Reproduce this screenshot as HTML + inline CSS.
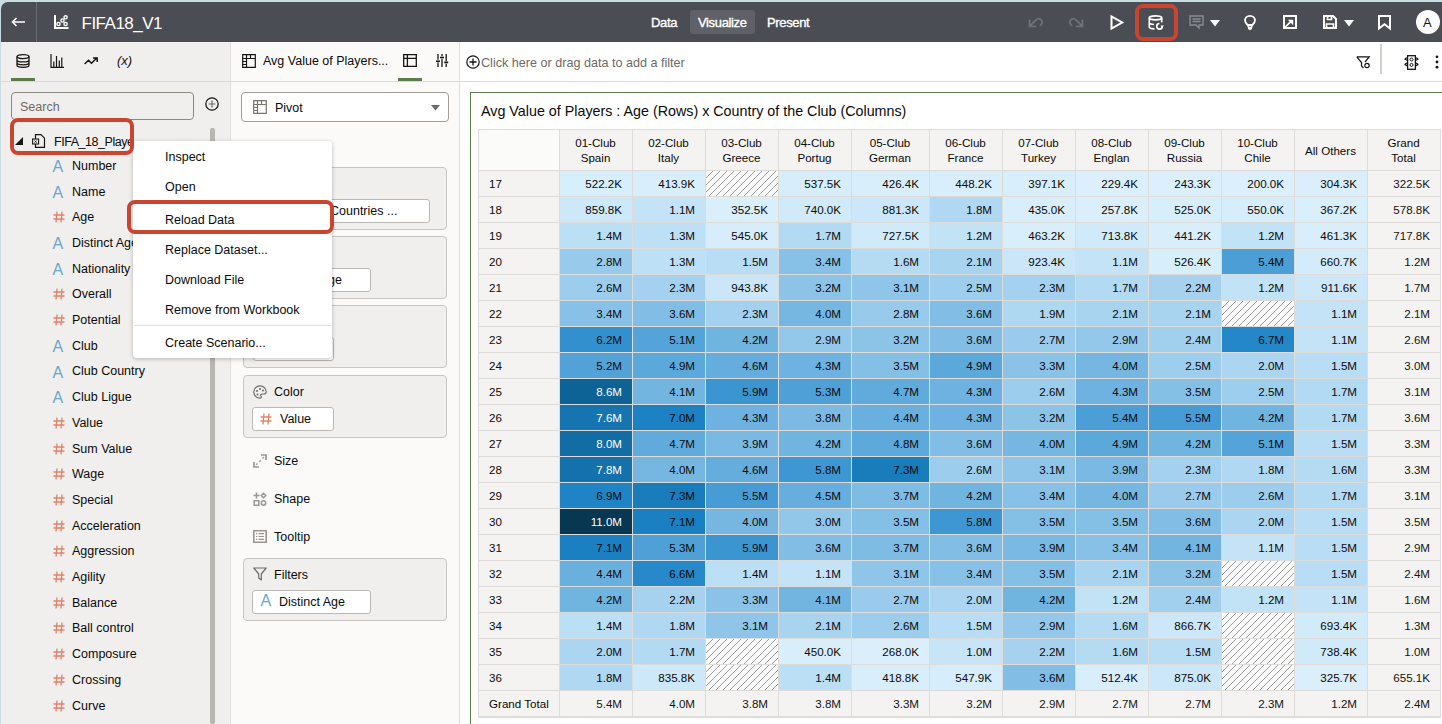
<!DOCTYPE html><html><head><meta charset="utf-8"><style>
*{box-sizing:border-box;margin:0;padding:0}
html,body{width:1442px;height:724px;overflow:hidden}
body{position:relative;background:#c7dde1;font-family:"Liberation Sans", sans-serif;color:#0b0a09}
.a{position:absolute}
.t{position:absolute;white-space:nowrap;line-height:1}
svg{position:absolute;overflow:visible}
</style></head><body><div class="a" style="left:1px;top:2px;width:1441px;height:40px;background:#4a4d54;border-top-left-radius:7px"></div>
<div class="a" style="left:36px;top:2px;width:1px;height:40px;background:#6b6e74"></div>
<svg style="left:11px;top:17px" width="15" height="10" viewBox="0 0 15 10"><path d="M14 5H2M5.5 1L1.5 5L5.5 9" fill="none" stroke="#fff" stroke-width="1.6"/></svg>
<svg style="left:54px;top:15px" width="15" height="15" viewBox="0 0 15 15"><path d="M1 0V13H14.5" fill="none" stroke="#fff" stroke-width="2"/><g fill="none" stroke="#fff" stroke-width="1.4"><circle cx="4.5" cy="9" r="1.6"/><circle cx="8.5" cy="5.5" r="1.6"/><circle cx="11.6" cy="9" r="1.6"/><circle cx="11.6" cy="2.3" r="1.6"/></g></svg>
<div class="t" style="left:81.5px;top:14.5px;font-size:17px;color:#fff;letter-spacing:-0.5px">FIFA18_V1</div>
<div class="a" style="left:690px;top:10px;width:65px;height:24px;background:#5e6167;border-radius:3px"></div>
<div class="t" style="left:651px;top:16px;font-size:13px;color:#fff;-webkit-text-stroke:0.35px #fff;letter-spacing:-0.3px">Data</div>
<div class="t" style="left:698px;top:16px;font-size:13px;color:#fff;-webkit-text-stroke:0.35px #fff;letter-spacing:-0.35px">Visualize</div>
<div class="t" style="left:767px;top:16px;font-size:13px;color:#fff;-webkit-text-stroke:0.35px #fff;letter-spacing:-0.35px">Present</div>
<svg style="left:1028px;top:17px" width="16" height="11" viewBox="0 0 16 11"><path d="M1.6 2.6V9.3H8M1.8 9L8.6 2.4A3.5 3.5 0 1 1 11.6 8.6" fill="none" stroke="#6e7176" stroke-width="1.8"/></svg>
<svg style="left:1068px;top:17px" width="16" height="11" viewBox="0 0 16 11"><g transform="translate(16 0) scale(-1 1)"><path d="M1.6 2.6V9.3H8M1.8 9L8.6 2.4A3.5 3.5 0 1 1 11.6 8.6" fill="none" stroke="#6e7176" stroke-width="1.8"/></g></svg>
<svg style="left:1110px;top:15px" width="14" height="15" viewBox="0 0 14 15"><path d="M1.5 1.5V13.5L12.2 7.5Z" fill="none" stroke="#fff" stroke-width="2" stroke-linejoin="miter"/></svg>
<div class="a" style="left:1135px;top:4px;width:43px;height:37px;border:4px solid #c9452f;border-radius:8px"></div>
<svg style="left:1148px;top:15px" width="16" height="15" viewBox="0 0 16 15"><ellipse cx="7.5" cy="2.8" rx="6.2" ry="2" fill="none" stroke="#fff" stroke-width="1.7"/><path d="M1.3 2.8V12C1.3 13 3.5 13.7 6.5 13.8M13.7 2.8V7.5M1.3 7.8C1.3 8.6 3 9.3 6 9.5" fill="none" stroke="#fff" stroke-width="1.7"/><path d="M14.3 11.3A2.8 2.8 0 1 1 11.5 8.5" fill="none" stroke="#fff" stroke-width="1.7"/><path d="M12.5 10.5L15.8 10.5L14.2 13.3Z" fill="#fff"/></svg>
<svg style="left:1189px;top:15px" width="15" height="14" viewBox="0 0 15 14"><path d="M1 1H14V10H10V13L7 10H1Z" fill="none" stroke="#8a8c90" stroke-width="1.4"/><path d="M3.5 4H11.5M3.5 6.5H11.5" stroke="#8a8c90" stroke-width="1.3"/></svg>
<svg style="left:1210px;top:20px" width="10" height="7" viewBox="0 0 10 7"><path d="M0 0H10L5 6.5Z" fill="#fff"/></svg>
<svg style="left:1244px;top:15px" width="12" height="15" viewBox="0 0 12 15"><path d="M3.6 10C2 8.6 1 7.2 1 5.3A5 4.5 0 0 1 11 5.3C11 7.2 10 8.6 8.4 10Z" fill="none" stroke="#fff" stroke-width="1.8"/><path d="M3.8 9.5L4.6 12.5H7.4L8.2 9.5M4.6 12.8A1.4 1.4 0 0 0 7.4 12.8" fill="none" stroke="#fff" stroke-width="1.6"/></svg>
<svg style="left:1283px;top:15px" width="14" height="14" viewBox="0 0 14 14"><path d="M1 1H13V13H1Z" fill="none" stroke="#fff" stroke-width="2"/><path d="M2.3 12L8.5 5.8" stroke="#fff" stroke-width="1.7"/><path d="M4.8 4.8H10.2V10.2Z" fill="#fff"/></svg>
<svg style="left:1323px;top:15px" width="14" height="14" viewBox="0 0 14 14"><path d="M1 1H10L13 4V13H1Z" fill="none" stroke="#fff" stroke-width="2"/><path d="M4.5 1V4.5H8.5V1M3.5 13V9H10.5V13" fill="none" stroke="#fff" stroke-width="1.7"/></svg>
<svg style="left:1344px;top:20px" width="10" height="7" viewBox="0 0 10 7"><path d="M0 0H10L5 6.5Z" fill="#fff"/></svg>
<svg style="left:1378px;top:15px" width="13" height="15" viewBox="0 0 13 15"><path d="M1 1H12V13.5L6.5 9.3L1 13.5Z" fill="none" stroke="#fff" stroke-width="2"/></svg>
<div class="a" style="left:1416px;top:10px;width:24px;height:24px;border-radius:50%;background:#fff"></div>
<div class="t" style="left:1423px;top:16px;font-size:13px;color:#161513">A</div>
<div class="a" style="left:1px;top:42px;width:230px;height:682px;background:#f1efed"></div>
<div class="a" style="left:1px;top:81px;width:230px;height:1px;background:#dcd9d5"></div>
<div class="a" style="left:11px;top:78px;width:24px;height:3px;background:#5b7b4c"></div>
<svg style="left:16px;top:54px" width="14" height="14" viewBox="0 0 14 14"><ellipse cx="7" cy="2.6" rx="6" ry="2" fill="none" stroke="#161513" stroke-width="1.3"/><path d="M1 2.6V11.3C1 12.5 3.7 13.3 7 13.3S13 12.5 13 11.3V2.6M1 5.9C1 7.1 3.7 7.9 7 7.9S13 7.1 13 5.9M1 8.8C1 10 3.7 10.8 7 10.8S13 10 13 8.8" fill="none" stroke="#161513" stroke-width="1.3"/></svg>
<svg style="left:50px;top:54px" width="14" height="14" viewBox="0 0 14 14"><path d="M1 0V13.3H14M3.8 7.5V13M6.5 2V13M9.3 6.5V13M11.8 3.5V13" fill="none" stroke="#161513" stroke-width="1.2"/></svg>
<svg style="left:84px;top:57px" width="14" height="8" viewBox="0 0 14 8"><path d="M0.6 7L4.5 3.3L7.5 6.3L12.8 1M9 1H13.2V5" fill="none" stroke="#161513" stroke-width="1.5"/></svg>
<div class="t" style="left:117px;top:54px;font-size:13px;font-style:italic;color:#161513">(x)</div>
<div class="a" style="left:11px;top:92px;width:183px;height:28px;border:1px solid #8f8984;border-radius:4px;background:#f1efed"></div>
<div class="t" style="left:20px;top:101px;font-size:12.5px;color:#6f6a65">Search</div>
<svg style="left:205px;top:97px" width="14" height="14" viewBox="0 0 14 14"><circle cx="7" cy="7" r="6.2" fill="none" stroke="#161513" stroke-width="1.2"/><path d="M7 3.6V10.4M3.6 7H10.4" stroke="#6f6a65" stroke-width="1.2"/></svg>
<div class="a" style="left:210px;top:128px;width:4.5px;height:596px;background:#b9b5b0;border-radius:2px"></div>
<svg style="left:15px;top:137px" width="8" height="8" viewBox="0 0 8 8"><path d="M8 0V8H0Z" fill="#161513"/></svg>
<svg style="left:32px;top:134px" width="14" height="14" viewBox="0 0 14 14"><path d="M3.5 0.7H9L12.5 4.2V13.3H3.5Z" fill="none" stroke="#161513" stroke-width="1.2"/><rect x="0.6" y="5" width="6" height="5" fill="#f1efed" stroke="#161513" stroke-width="1.1"/><path d="M2.5 6.5L4.7 8.7M4.7 6.5L2.5 8.7" stroke="#161513" stroke-width="0.9"/></svg>
<div class="t" style="left:54px;top:136px;width:78px;overflow:hidden;font-size:12.5px;letter-spacing:-0.45px">FIFA_18_Playe</div>
<div class="t" style="left:52.5px;top:159.0px;font-size:16px;color:#6aa6cb">A</div>
<div class="t" style="left:72px;top:159.8px;font-size:12.5px">Number</div>
<div class="t" style="left:52.5px;top:184.7px;font-size:16px;color:#6aa6cb">A</div>
<div class="t" style="left:72px;top:185.5px;font-size:12.5px">Name</div>
<svg style="left:53px;top:211.2px" width="12" height="12" viewBox="0 0 12 12"><path d="M4 0.5L3 11.5M9 0.5L8 11.5M0.5 4H11.5M0.5 8H11.5" stroke="#e0826a" stroke-width="1.3"/></svg>
<div class="t" style="left:72px;top:211.2px;font-size:12.5px">Age</div>
<div class="t" style="left:52.5px;top:236.1px;font-size:16px;color:#6aa6cb">A</div>
<div class="t" style="left:72px;top:236.9px;font-size:12.5px">Distinct Age</div>
<div class="t" style="left:52.5px;top:261.8px;font-size:16px;color:#6aa6cb">A</div>
<div class="t" style="left:72px;top:262.6px;font-size:12.5px">Nationality</div>
<svg style="left:53px;top:288.3px" width="12" height="12" viewBox="0 0 12 12"><path d="M4 0.5L3 11.5M9 0.5L8 11.5M0.5 4H11.5M0.5 8H11.5" stroke="#e0826a" stroke-width="1.3"/></svg>
<div class="t" style="left:72px;top:288.3px;font-size:12.5px">Overall</div>
<svg style="left:53px;top:314.0px" width="12" height="12" viewBox="0 0 12 12"><path d="M4 0.5L3 11.5M9 0.5L8 11.5M0.5 4H11.5M0.5 8H11.5" stroke="#e0826a" stroke-width="1.3"/></svg>
<div class="t" style="left:72px;top:314.0px;font-size:12.5px">Potential</div>
<div class="t" style="left:52.5px;top:338.9px;font-size:16px;color:#6aa6cb">A</div>
<div class="t" style="left:72px;top:339.7px;font-size:12.5px">Club</div>
<div class="t" style="left:52.5px;top:364.6px;font-size:16px;color:#6aa6cb">A</div>
<div class="t" style="left:72px;top:365.4px;font-size:12.5px">Club Country</div>
<div class="t" style="left:52.5px;top:390.3px;font-size:16px;color:#6aa6cb">A</div>
<div class="t" style="left:72px;top:391.1px;font-size:12.5px">Club Ligue</div>
<svg style="left:53px;top:416.8px" width="12" height="12" viewBox="0 0 12 12"><path d="M4 0.5L3 11.5M9 0.5L8 11.5M0.5 4H11.5M0.5 8H11.5" stroke="#e0826a" stroke-width="1.3"/></svg>
<div class="t" style="left:72px;top:416.8px;font-size:12.5px">Value</div>
<svg style="left:53px;top:442.5px" width="12" height="12" viewBox="0 0 12 12"><path d="M4 0.5L3 11.5M9 0.5L8 11.5M0.5 4H11.5M0.5 8H11.5" stroke="#e0826a" stroke-width="1.3"/></svg>
<div class="t" style="left:72px;top:442.5px;font-size:12.5px">Sum Value</div>
<svg style="left:53px;top:468.2px" width="12" height="12" viewBox="0 0 12 12"><path d="M4 0.5L3 11.5M9 0.5L8 11.5M0.5 4H11.5M0.5 8H11.5" stroke="#e0826a" stroke-width="1.3"/></svg>
<div class="t" style="left:72px;top:468.2px;font-size:12.5px">Wage</div>
<svg style="left:53px;top:493.9px" width="12" height="12" viewBox="0 0 12 12"><path d="M4 0.5L3 11.5M9 0.5L8 11.5M0.5 4H11.5M0.5 8H11.5" stroke="#e0826a" stroke-width="1.3"/></svg>
<div class="t" style="left:72px;top:493.9px;font-size:12.5px">Special</div>
<svg style="left:53px;top:519.6px" width="12" height="12" viewBox="0 0 12 12"><path d="M4 0.5L3 11.5M9 0.5L8 11.5M0.5 4H11.5M0.5 8H11.5" stroke="#e0826a" stroke-width="1.3"/></svg>
<div class="t" style="left:72px;top:519.6px;font-size:12.5px">Acceleration</div>
<svg style="left:53px;top:545.3px" width="12" height="12" viewBox="0 0 12 12"><path d="M4 0.5L3 11.5M9 0.5L8 11.5M0.5 4H11.5M0.5 8H11.5" stroke="#e0826a" stroke-width="1.3"/></svg>
<div class="t" style="left:72px;top:545.3px;font-size:12.5px">Aggression</div>
<svg style="left:53px;top:571.0px" width="12" height="12" viewBox="0 0 12 12"><path d="M4 0.5L3 11.5M9 0.5L8 11.5M0.5 4H11.5M0.5 8H11.5" stroke="#e0826a" stroke-width="1.3"/></svg>
<div class="t" style="left:72px;top:571.0px;font-size:12.5px">Agility</div>
<svg style="left:53px;top:596.7px" width="12" height="12" viewBox="0 0 12 12"><path d="M4 0.5L3 11.5M9 0.5L8 11.5M0.5 4H11.5M0.5 8H11.5" stroke="#e0826a" stroke-width="1.3"/></svg>
<div class="t" style="left:72px;top:596.7px;font-size:12.5px">Balance</div>
<svg style="left:53px;top:622.4px" width="12" height="12" viewBox="0 0 12 12"><path d="M4 0.5L3 11.5M9 0.5L8 11.5M0.5 4H11.5M0.5 8H11.5" stroke="#e0826a" stroke-width="1.3"/></svg>
<div class="t" style="left:72px;top:622.4px;font-size:12.5px">Ball control</div>
<svg style="left:53px;top:648.1px" width="12" height="12" viewBox="0 0 12 12"><path d="M4 0.5L3 11.5M9 0.5L8 11.5M0.5 4H11.5M0.5 8H11.5" stroke="#e0826a" stroke-width="1.3"/></svg>
<div class="t" style="left:72px;top:648.1px;font-size:12.5px">Composure</div>
<svg style="left:53px;top:673.8px" width="12" height="12" viewBox="0 0 12 12"><path d="M4 0.5L3 11.5M9 0.5L8 11.5M0.5 4H11.5M0.5 8H11.5" stroke="#e0826a" stroke-width="1.3"/></svg>
<div class="t" style="left:72px;top:673.8px;font-size:12.5px">Crossing</div>
<svg style="left:53px;top:699.5px" width="12" height="12" viewBox="0 0 12 12"><path d="M4 0.5L3 11.5M9 0.5L8 11.5M0.5 4H11.5M0.5 8H11.5" stroke="#e0826a" stroke-width="1.3"/></svg>
<div class="t" style="left:72px;top:699.5px;font-size:12.5px">Curve</div>
<div class="a" style="left:230px;top:42px;width:230px;height:682px;background:#fbfaf9;border-left:1px solid #e2dfdb;border-right:1px solid #e2dfdb"></div>
<div class="a" style="left:231px;top:81px;width:229px;height:1px;background:#dcd9d5"></div>
<div class="a" style="left:398px;top:78px;width:24px;height:3px;background:#5b7b4c"></div>
<svg style="left:242px;top:54px" width="14" height="14" viewBox="0 0 14 14"><path d="M0.7 0.7H13.3V13.3H0.7ZM0.7 4.5H13.3M4.5 0.7V13.3M0.7 7.5H4.5M0.7 10.5H4.5M8.5 0.7V4.5" fill="none" stroke="#161513" stroke-width="1.2"/></svg>
<div class="t" style="left:263px;top:55px;font-size:12.5px">Avg Value of Players...</div>
<svg style="left:403px;top:54px" width="14" height="13" viewBox="0 0 14 13"><path d="M0.7 0.7H13.3V12.3H0.7ZM4.4 0.7V12.3M0.7 4.3H13.3" fill="none" stroke="#161513" stroke-width="1.3"/></svg>
<svg style="left:436px;top:54px" width="13" height="13" viewBox="0 0 13 13"><path d="M2 0V5.8M2 8.6V13M6 0V2.2M6 4.8V13M10.2 0V7M10.2 9.8V13" stroke="#161513" stroke-width="1.3"/><path d="M0 7.3H4M4 3.5H8M8.2 8.4H12.2" stroke="#161513" stroke-width="1.6"/></svg>
<div class="a" style="left:241px;top:92px;width:208px;height:30px;border:1px solid #a29c97;border-radius:4px;background:#fff"></div>
<svg style="left:253px;top:100px" width="14" height="14" viewBox="0 0 14 14"><path d="M0.7 0.7H13.3V13.3H0.7ZM0.7 4.5H13.3M4.5 0.7V13.3M0.7 7.5H4.5M0.7 10.5H4.5M8.5 0.7V4.5" fill="none" stroke="#7a746f" stroke-width="1.2"/></svg>
<div class="t" style="left:275px;top:102px;font-size:12.5px">Pivot</div>
<svg style="left:431px;top:105px" width="9" height="6" viewBox="0 0 9 6"><path d="M0 0H9L4.5 5.5Z" fill="#6f6a65"/></svg>
<div class="a" style="left:243px;top:167px;width:204px;height:63px;border:1px solid #c9c5c0;border-radius:4px;background:#f1efed"></div>
<div class="a" style="left:253px;top:199px;width:177px;height:24px;border:1px solid #bdb8b3;border-radius:3px;background:#fff"></div>
<div class="t" style="left:330px;top:205px;font-size:12.5px">Countries ...</div>
<div class="a" style="left:243px;top:236px;width:204px;height:63px;border:1px solid #c9c5c0;border-radius:4px;background:#f1efed"></div>
<div class="a" style="left:253px;top:268px;width:118px;height:24px;border:1px solid #bdb8b3;border-radius:3px;background:#fff"></div>
<div class="t" style="left:328px;top:274px;font-size:12.5px">ge</div>
<div class="a" style="left:243px;top:305px;width:204px;height:63px;border:1px solid #c9c5c0;border-radius:4px;background:#f1efed"></div>
<div class="a" style="left:253px;top:337px;width:81px;height:24px;border:1px solid #bdb8b3;border-radius:3px;background:#fff"></div>
<div class="a" style="left:243px;top:375px;width:204px;height:63px;border:1px solid #c9c5c0;border-radius:4px;background:#f1efed"></div>
<div class="a" style="left:252px;top:407px;width:82px;height:24px;border:1px solid #bdb8b3;border-radius:3px;background:#fff"></div>
<svg style="left:253px;top:385px" width="14" height="14" viewBox="0 0 14 14"><path d="M7 0.8A6.2 6.2 0 1 0 7 13.2C8.2 13.2 8.5 12.2 8 11.2C7.3 10 8 9 9.3 9H11C12.5 9 13.2 8 13.2 6.8A6.2 6 0 0 0 7 0.8Z" fill="none" stroke="#6f6a65" stroke-width="1.2"/><circle cx="4" cy="6" r="1" fill="#6f6a65"/><circle cx="7" cy="4" r="1" fill="#6f6a65"/><circle cx="10" cy="5.5" r="1" fill="#6f6a65"/><circle cx="4.5" cy="9.5" r="1" fill="#6f6a65"/></svg>
<div class="t" style="left:274px;top:386px;font-size:12.5px">Color</div>
<svg style="left:260px;top:413px" width="12" height="12" viewBox="0 0 12 12"><path d="M4 0.5L3 11.5M9 0.5L8 11.5M0.5 4H11.5M0.5 8H11.5" stroke="#e0826a" stroke-width="1.3"/></svg>
<div class="t" style="left:280px;top:413px;font-size:12.5px">Value</div>
<svg style="left:253px;top:454px" width="14" height="14" viewBox="0 0 14 14"><path d="M1 8V13H6M8 1H13V6" fill="none" stroke="#9c9691" stroke-width="1.7"/><path d="M3.2 10.8L4.5 9.5M6.3 7.7L7.7 6.3M9.5 4.5L10.8 3.2" stroke="#9c9691" stroke-width="1.4"/></svg>
<div class="t" style="left:274px;top:455px;font-size:12.5px">Size</div>
<svg style="left:253px;top:492px" width="14" height="14" viewBox="0 0 14 14"><path d="M3.5 0.5V6.5M0.5 3.5H6.5" stroke="#9c9691" stroke-width="1.6"/><path d="M10.5 1.2L12.8 3.5L10.5 5.8L8.2 3.5Z" fill="none" stroke="#9c9691" stroke-width="1.4"/><rect x="1.2" y="8.7" width="4.6" height="4.6" fill="none" stroke="#9c9691" stroke-width="1.5"/><circle cx="10.5" cy="11" r="2.2" fill="none" stroke="#9c9691" stroke-width="1.5"/></svg>
<div class="t" style="left:274px;top:493px;font-size:12.5px">Shape</div>
<svg style="left:253px;top:530px" width="14" height="13" viewBox="0 0 14 13"><path d="M0.8 0.8H13.2V12.2H0.8Z" fill="none" stroke="#9c9691" stroke-width="1.6"/><path d="M3 3.6H4.3M5.6 3.6H11M3 6.5H4.3M5.6 6.5H11M3 9.4H4.3M5.6 9.4H11" stroke="#9c9691" stroke-width="1.2"/></svg>
<div class="t" style="left:274px;top:531px;font-size:12.5px">Tooltip</div>
<div class="a" style="left:243px;top:558px;width:204px;height:63px;border:1px solid #c9c5c0;border-radius:4px;background:#f1efed"></div>
<div class="a" style="left:252px;top:590px;width:119px;height:24px;border:1px solid #bdb8b3;border-radius:3px;background:#fff"></div>
<svg style="left:253px;top:567px" width="14" height="14" viewBox="0 0 14 14"><path d="M0.8 1H13.2L8.3 7V13L5.7 11V7Z" fill="none" stroke="#6f6a65" stroke-width="1.2" stroke-linejoin="round"/></svg>
<div class="t" style="left:274px;top:569px;font-size:12.5px">Filters</div>
<div class="t" style="left:260.5px;top:592.5px;font-size:16px;color:#6aa6cb">A</div>
<div class="t" style="left:279px;top:596px;font-size:12.5px">Distinct Age</div>
<div class="a" style="left:133px;top:141px;width:199px;height:217px;background:#fff;border-radius:4px;box-shadow:0 1px 4px rgba(0,0,0,0.25)"></div>
<div class="t" style="left:165px;top:150.5px;font-size:12.5px">Inspect</div>
<div class="t" style="left:165px;top:180.5px;font-size:12.5px">Open</div>
<div class="t" style="left:165px;top:213.5px;font-size:12.5px">Reload Data</div>
<div class="t" style="left:165px;top:243.5px;font-size:12.5px">Replace Dataset...</div>
<div class="t" style="left:165px;top:273.5px;font-size:12.5px">Download File</div>
<div class="t" style="left:165px;top:303.5px;font-size:12.5px">Remove from Workbook</div>
<div class="t" style="left:165px;top:336.5px;font-size:12.5px">Create Scenario...</div>
<div class="a" style="left:134px;top:325px;width:197px;height:1px;background:#e4e1dd"></div>
<div class="a" style="left:127.3px;top:200.3px;width:207px;height:34.2px;border:4.2px solid #c9452f;border-radius:8px"></div>
<div class="a" style="left:9.7px;top:118.3px;width:124.5px;height:37px;border:4.2px solid #c9452f;border-radius:8px"></div>
<div class="a" style="left:460px;top:42px;width:982px;height:682px;background:#fff"></div>
<div class="a" style="left:460px;top:81px;width:982px;height:1px;background:#dcd9d5"></div>
<svg style="left:466px;top:55px" width="14" height="14" viewBox="0 0 14 14"><circle cx="7" cy="7" r="6.2" fill="none" stroke="#161513" stroke-width="1.2"/><path d="M7 3.5V10.5M3.5 7H10.5" stroke="#161513" stroke-width="1.3"/></svg>
<div class="t" style="left:481px;top:57px;font-size:12.6px;color:#6f6a65">Click here or drag data to add a filter</div>
<svg style="left:1356px;top:56px" width="15" height="13" viewBox="0 0 15 13"><path d="M0.8 0.8H13.2L9 6M7.5 12L5.5 10V6.5L0.8 0.8" fill="none" stroke="#161513" stroke-width="1.2"/><circle cx="11" cy="9.5" r="2.2" fill="none" stroke="#161513" stroke-width="1.2"/></svg>
<div class="a" style="left:1380px;top:44px;width:2px;height:30px;background:#d3cfca"></div>
<svg style="left:1404px;top:55px" width="15" height="15" viewBox="0 0 15 15"><rect x="3.6" y="0.7" width="7.8" height="13.6" fill="none" stroke="#161513" stroke-width="1.3"/><circle cx="7.5" cy="4.5" r="1.5" fill="none" stroke="#161513" stroke-width="1"/><circle cx="7.5" cy="9.9" r="1.5" fill="none" stroke="#161513" stroke-width="1"/><path d="M3.6 2.8A2.5 2 0 0 0 1 4.2L3.6 5.5M3.6 8.2A2.5 2 0 0 0 1 9.6L3.6 10.9M11.4 2.8A2.5 2 0 0 1 14 4.2L11.4 5.5M11.4 8.2A2.5 2 0 0 1 14 9.6L11.4 10.9" fill="none" stroke="#161513" stroke-width="1.2"/></svg>
<svg style="left:1435px;top:55px" width="4" height="14" viewBox="0 0 4 14"><circle cx="2" cy="1.8" r="1.4" fill="#161513"/><circle cx="2" cy="7" r="1.4" fill="#161513"/><circle cx="2" cy="12.2" r="1.4" fill="#161513"/></svg>
<div class="a" style="left:470px;top:92px;width:980px;height:640px;border:1px solid #5f7f50"></div>
<div class="t" style="left:481px;top:104px;font-size:14.3px">Avg Value of Players : Age (Rows) x Country of the Club (Columns)</div>
<div class="a" style="left:478px;top:129px;width:963px;height:589px;background:#dedcd9"></div>
<div class="a" style="left:479px;top:130px;width:80px;height:40px;background:#fbfbfa"></div>
<div class="a" style="left:560px;top:130px;width:72px;height:40px;background:#f4f3f1"></div>
<div class="t" style="left:559px;top:135px;width:73px;text-align:center;font-size:11.6px;line-height:15px">01-Club<br>Spain</div>
<div class="a" style="left:633px;top:130px;width:72px;height:40px;background:#f4f3f1"></div>
<div class="t" style="left:632px;top:135px;width:73px;text-align:center;font-size:11.6px;line-height:15px">02-Club<br>Italy</div>
<div class="a" style="left:706px;top:130px;width:72px;height:40px;background:#f4f3f1"></div>
<div class="t" style="left:705px;top:135px;width:73px;text-align:center;font-size:11.6px;line-height:15px">03-Club<br>Greece</div>
<div class="a" style="left:779px;top:130px;width:72px;height:40px;background:#f4f3f1"></div>
<div class="t" style="left:778px;top:135px;width:73px;text-align:center;font-size:11.6px;line-height:15px">04-Club<br>Portug</div>
<div class="a" style="left:852px;top:130px;width:77px;height:40px;background:#f4f3f1"></div>
<div class="t" style="left:851px;top:135px;width:78px;text-align:center;font-size:11.6px;line-height:15px">05-Club<br>German</div>
<div class="a" style="left:930px;top:130px;width:72px;height:40px;background:#f4f3f1"></div>
<div class="t" style="left:929px;top:135px;width:73px;text-align:center;font-size:11.6px;line-height:15px">06-Club<br>France</div>
<div class="a" style="left:1003px;top:130px;width:72px;height:40px;background:#f4f3f1"></div>
<div class="t" style="left:1002px;top:135px;width:73px;text-align:center;font-size:11.6px;line-height:15px">07-Club<br>Turkey</div>
<div class="a" style="left:1076px;top:130px;width:72px;height:40px;background:#f4f3f1"></div>
<div class="t" style="left:1075px;top:135px;width:73px;text-align:center;font-size:11.6px;line-height:15px">08-Club<br>Englan</div>
<div class="a" style="left:1149px;top:130px;width:72px;height:40px;background:#f4f3f1"></div>
<div class="t" style="left:1148px;top:135px;width:73px;text-align:center;font-size:11.6px;line-height:15px">09-Club<br>Russia</div>
<div class="a" style="left:1222px;top:130px;width:72px;height:40px;background:#f4f3f1"></div>
<div class="t" style="left:1221px;top:135px;width:73px;text-align:center;font-size:11.6px;line-height:15px">10-Club<br>Chile</div>
<div class="a" style="left:1295px;top:130px;width:72px;height:40px;background:#f4f3f1"></div>
<div class="t" style="left:1294px;top:143px;width:73px;text-align:center;font-size:11.6px;line-height:15px">All Others</div>
<div class="a" style="left:1368px;top:130px;width:72px;height:40px;background:#f4f3f1"></div>
<div class="t" style="left:1367px;top:135px;width:73px;text-align:center;font-size:11.6px;line-height:15px">Grand<br>Total</div>
<div class="a" style="left:479px;top:171px;width:80px;height:25px;background:#f4f3f1"></div>
<div class="t" style="left:489px;top:178px;font-size:11.6px">17</div>
<div class="a" style="left:560px;top:171px;width:72px;height:25px;background:#d7eefb"></div>
<div class="t" style="left:559px;top:178px;width:63px;text-align:right;font-size:11.6px;color:#0b0a09">522.2K</div>
<div class="a" style="left:633px;top:171px;width:72px;height:25px;background:#d9eefb"></div>
<div class="t" style="left:632px;top:178px;width:63px;text-align:right;font-size:11.6px;color:#0b0a09">413.9K</div>
<div class="a" style="left:706px;top:171px;width:72px;height:25px;background:repeating-linear-gradient(135deg,#fafafa 0 4.25px,#9d9d9d 4.25px 4.95px)"></div>
<div class="a" style="left:779px;top:171px;width:72px;height:25px;background:#d7edfb"></div>
<div class="t" style="left:778px;top:178px;width:63px;text-align:right;font-size:11.6px;color:#0b0a09">537.5K</div>
<div class="a" style="left:852px;top:171px;width:77px;height:25px;background:#d9eefb"></div>
<div class="t" style="left:851px;top:178px;width:68px;text-align:right;font-size:11.6px;color:#0b0a09">426.4K</div>
<div class="a" style="left:930px;top:171px;width:72px;height:25px;background:#d9eefb"></div>
<div class="t" style="left:929px;top:178px;width:63px;text-align:right;font-size:11.6px;color:#0b0a09">448.2K</div>
<div class="a" style="left:1003px;top:171px;width:72px;height:25px;background:#d9eefb"></div>
<div class="t" style="left:1002px;top:178px;width:63px;text-align:right;font-size:11.6px;color:#0b0a09">397.1K</div>
<div class="a" style="left:1076px;top:171px;width:72px;height:25px;background:#dbeffc"></div>
<div class="t" style="left:1075px;top:178px;width:63px;text-align:right;font-size:11.6px;color:#0b0a09">229.4K</div>
<div class="a" style="left:1149px;top:171px;width:72px;height:25px;background:#dbeffc"></div>
<div class="t" style="left:1148px;top:178px;width:63px;text-align:right;font-size:11.6px;color:#0b0a09">243.3K</div>
<div class="a" style="left:1222px;top:171px;width:72px;height:25px;background:#dbeffc"></div>
<div class="t" style="left:1221px;top:178px;width:63px;text-align:right;font-size:11.6px;color:#0b0a09">200.0K</div>
<div class="a" style="left:1295px;top:171px;width:72px;height:25px;background:#daeffb"></div>
<div class="t" style="left:1294px;top:178px;width:63px;text-align:right;font-size:11.6px;color:#0b0a09">304.3K</div>
<div class="a" style="left:1368px;top:171px;width:72px;height:25px;background:#f4f3f1"></div>
<div class="t" style="left:1367px;top:178px;width:63px;text-align:right;font-size:11.6px;color:#161513">322.5K</div>
<div class="a" style="left:479px;top:197px;width:80px;height:25px;background:#f4f3f1"></div>
<div class="t" style="left:489px;top:204px;font-size:11.6px">18</div>
<div class="a" style="left:560px;top:197px;width:72px;height:25px;background:#cce8f9"></div>
<div class="t" style="left:559px;top:204px;width:63px;text-align:right;font-size:11.6px;color:#0b0a09">859.8K</div>
<div class="a" style="left:633px;top:197px;width:72px;height:25px;background:#c5e3f7"></div>
<div class="t" style="left:632px;top:204px;width:63px;text-align:right;font-size:11.6px;color:#0b0a09">1.1M</div>
<div class="a" style="left:706px;top:197px;width:72px;height:25px;background:#d9effb"></div>
<div class="t" style="left:705px;top:204px;width:63px;text-align:right;font-size:11.6px;color:#0b0a09">352.5K</div>
<div class="a" style="left:779px;top:197px;width:72px;height:25px;background:#d0eafa"></div>
<div class="t" style="left:778px;top:204px;width:63px;text-align:right;font-size:11.6px;color:#0b0a09">740.0K</div>
<div class="a" style="left:852px;top:197px;width:77px;height:25px;background:#cce7f9"></div>
<div class="t" style="left:851px;top:204px;width:68px;text-align:right;font-size:11.6px;color:#0b0a09">881.3K</div>
<div class="a" style="left:930px;top:197px;width:72px;height:25px;background:#b0d8f2"></div>
<div class="t" style="left:929px;top:204px;width:63px;text-align:right;font-size:11.6px;color:#0b0a09">1.8M</div>
<div class="a" style="left:1003px;top:197px;width:72px;height:25px;background:#d9eefb"></div>
<div class="t" style="left:1002px;top:204px;width:63px;text-align:right;font-size:11.6px;color:#0b0a09">435.0K</div>
<div class="a" style="left:1076px;top:197px;width:72px;height:25px;background:#daeffb"></div>
<div class="t" style="left:1075px;top:204px;width:63px;text-align:right;font-size:11.6px;color:#0b0a09">257.8K</div>
<div class="a" style="left:1149px;top:197px;width:72px;height:25px;background:#d7eefb"></div>
<div class="t" style="left:1148px;top:204px;width:63px;text-align:right;font-size:11.6px;color:#0b0a09">525.0K</div>
<div class="a" style="left:1222px;top:197px;width:72px;height:25px;background:#d6edfb"></div>
<div class="t" style="left:1221px;top:204px;width:63px;text-align:right;font-size:11.6px;color:#0b0a09">550.0K</div>
<div class="a" style="left:1295px;top:197px;width:72px;height:25px;background:#d9effb"></div>
<div class="t" style="left:1294px;top:204px;width:63px;text-align:right;font-size:11.6px;color:#0b0a09">367.2K</div>
<div class="a" style="left:1368px;top:197px;width:72px;height:25px;background:#f4f3f1"></div>
<div class="t" style="left:1367px;top:204px;width:63px;text-align:right;font-size:11.6px;color:#161513">578.8K</div>
<div class="a" style="left:479px;top:223px;width:80px;height:25px;background:#f4f3f1"></div>
<div class="t" style="left:489px;top:230px;font-size:11.6px">19</div>
<div class="a" style="left:560px;top:223px;width:72px;height:25px;background:#bbdff5"></div>
<div class="t" style="left:559px;top:230px;width:63px;text-align:right;font-size:11.6px;color:#0b0a09">1.4M</div>
<div class="a" style="left:633px;top:223px;width:72px;height:25px;background:#bee0f6"></div>
<div class="t" style="left:632px;top:230px;width:63px;text-align:right;font-size:11.6px;color:#0b0a09">1.3M</div>
<div class="a" style="left:706px;top:223px;width:72px;height:25px;background:#d7edfb"></div>
<div class="t" style="left:705px;top:230px;width:63px;text-align:right;font-size:11.6px;color:#0b0a09">545.0K</div>
<div class="a" style="left:779px;top:223px;width:72px;height:25px;background:#b3daf3"></div>
<div class="t" style="left:778px;top:230px;width:63px;text-align:right;font-size:11.6px;color:#0b0a09">1.7M</div>
<div class="a" style="left:852px;top:223px;width:77px;height:25px;background:#d1eafa"></div>
<div class="t" style="left:851px;top:230px;width:68px;text-align:right;font-size:11.6px;color:#0b0a09">727.5K</div>
<div class="a" style="left:930px;top:223px;width:72px;height:25px;background:#c2e2f6"></div>
<div class="t" style="left:929px;top:230px;width:63px;text-align:right;font-size:11.6px;color:#0b0a09">1.2M</div>
<div class="a" style="left:1003px;top:223px;width:72px;height:25px;background:#d8eefb"></div>
<div class="t" style="left:1002px;top:230px;width:63px;text-align:right;font-size:11.6px;color:#0b0a09">463.2K</div>
<div class="a" style="left:1076px;top:223px;width:72px;height:25px;background:#d1eafa"></div>
<div class="t" style="left:1075px;top:230px;width:63px;text-align:right;font-size:11.6px;color:#0b0a09">713.8K</div>
<div class="a" style="left:1149px;top:223px;width:72px;height:25px;background:#d9eefb"></div>
<div class="t" style="left:1148px;top:230px;width:63px;text-align:right;font-size:11.6px;color:#0b0a09">441.2K</div>
<div class="a" style="left:1222px;top:223px;width:72px;height:25px;background:#c2e2f6"></div>
<div class="t" style="left:1221px;top:230px;width:63px;text-align:right;font-size:11.6px;color:#0b0a09">1.2M</div>
<div class="a" style="left:1295px;top:223px;width:72px;height:25px;background:#d8eefb"></div>
<div class="t" style="left:1294px;top:230px;width:63px;text-align:right;font-size:11.6px;color:#0b0a09">461.3K</div>
<div class="a" style="left:1368px;top:223px;width:72px;height:25px;background:#f4f3f1"></div>
<div class="t" style="left:1367px;top:230px;width:63px;text-align:right;font-size:11.6px;color:#161513">717.8K</div>
<div class="a" style="left:479px;top:249px;width:80px;height:25px;background:#f4f3f1"></div>
<div class="t" style="left:489px;top:256px;font-size:11.6px">20</div>
<div class="a" style="left:560px;top:249px;width:72px;height:25px;background:#97caeb"></div>
<div class="t" style="left:559px;top:256px;width:63px;text-align:right;font-size:11.6px;color:#0b0a09">2.8M</div>
<div class="a" style="left:633px;top:249px;width:72px;height:25px;background:#bee0f6"></div>
<div class="t" style="left:632px;top:256px;width:63px;text-align:right;font-size:11.6px;color:#0b0a09">1.3M</div>
<div class="a" style="left:706px;top:249px;width:72px;height:25px;background:#b8ddf4"></div>
<div class="t" style="left:705px;top:256px;width:63px;text-align:right;font-size:11.6px;color:#0b0a09">1.5M</div>
<div class="a" style="left:779px;top:249px;width:72px;height:25px;background:#87c1e7"></div>
<div class="t" style="left:778px;top:256px;width:63px;text-align:right;font-size:11.6px;color:#0b0a09">3.4M</div>
<div class="a" style="left:852px;top:249px;width:77px;height:25px;background:#b5dbf3"></div>
<div class="t" style="left:851px;top:256px;width:68px;text-align:right;font-size:11.6px;color:#0b0a09">1.6M</div>
<div class="a" style="left:930px;top:249px;width:72px;height:25px;background:#a8d4f0"></div>
<div class="t" style="left:929px;top:256px;width:63px;text-align:right;font-size:11.6px;color:#0b0a09">2.1M</div>
<div class="a" style="left:1003px;top:249px;width:72px;height:25px;background:#cae6f8"></div>
<div class="t" style="left:1002px;top:256px;width:63px;text-align:right;font-size:11.6px;color:#0b0a09">923.4K</div>
<div class="a" style="left:1076px;top:249px;width:72px;height:25px;background:#c5e3f7"></div>
<div class="t" style="left:1075px;top:256px;width:63px;text-align:right;font-size:11.6px;color:#0b0a09">1.1M</div>
<div class="a" style="left:1149px;top:249px;width:72px;height:25px;background:#d7eefb"></div>
<div class="t" style="left:1148px;top:256px;width:63px;text-align:right;font-size:11.6px;color:#0b0a09">526.4K</div>
<div class="a" style="left:1222px;top:249px;width:72px;height:25px;background:#4b9ed6"></div>
<div class="t" style="left:1221px;top:256px;width:63px;text-align:right;font-size:11.6px;color:#0b0a09">5.4M</div>
<div class="a" style="left:1295px;top:249px;width:72px;height:25px;background:#d3ebfa"></div>
<div class="t" style="left:1294px;top:256px;width:63px;text-align:right;font-size:11.6px;color:#0b0a09">660.7K</div>
<div class="a" style="left:1368px;top:249px;width:72px;height:25px;background:#f4f3f1"></div>
<div class="t" style="left:1367px;top:256px;width:63px;text-align:right;font-size:11.6px;color:#161513">1.2M</div>
<div class="a" style="left:479px;top:275px;width:80px;height:25px;background:#f4f3f1"></div>
<div class="t" style="left:489px;top:282px;font-size:11.6px">21</div>
<div class="a" style="left:560px;top:275px;width:72px;height:25px;background:#9ccded"></div>
<div class="t" style="left:559px;top:282px;width:63px;text-align:right;font-size:11.6px;color:#0b0a09">2.6M</div>
<div class="a" style="left:633px;top:275px;width:72px;height:25px;background:#a4d1ef"></div>
<div class="t" style="left:632px;top:282px;width:63px;text-align:right;font-size:11.6px;color:#0b0a09">2.3M</div>
<div class="a" style="left:706px;top:275px;width:72px;height:25px;background:#cae6f8"></div>
<div class="t" style="left:705px;top:282px;width:63px;text-align:right;font-size:11.6px;color:#0b0a09">943.8K</div>
<div class="a" style="left:779px;top:275px;width:72px;height:25px;background:#8cc4e8"></div>
<div class="t" style="left:778px;top:282px;width:63px;text-align:right;font-size:11.6px;color:#0b0a09">3.2M</div>
<div class="a" style="left:852px;top:275px;width:77px;height:25px;background:#8fc5e9"></div>
<div class="t" style="left:851px;top:282px;width:68px;text-align:right;font-size:11.6px;color:#0b0a09">3.1M</div>
<div class="a" style="left:930px;top:275px;width:72px;height:25px;background:#9eceee"></div>
<div class="t" style="left:929px;top:282px;width:63px;text-align:right;font-size:11.6px;color:#0b0a09">2.5M</div>
<div class="a" style="left:1003px;top:275px;width:72px;height:25px;background:#a4d1ef"></div>
<div class="t" style="left:1002px;top:282px;width:63px;text-align:right;font-size:11.6px;color:#0b0a09">2.3M</div>
<div class="a" style="left:1076px;top:275px;width:72px;height:25px;background:#b3daf3"></div>
<div class="t" style="left:1075px;top:282px;width:63px;text-align:right;font-size:11.6px;color:#0b0a09">1.7M</div>
<div class="a" style="left:1149px;top:275px;width:72px;height:25px;background:#a6d2f0"></div>
<div class="t" style="left:1148px;top:282px;width:63px;text-align:right;font-size:11.6px;color:#0b0a09">2.2M</div>
<div class="a" style="left:1222px;top:275px;width:72px;height:25px;background:#c2e2f6"></div>
<div class="t" style="left:1221px;top:282px;width:63px;text-align:right;font-size:11.6px;color:#0b0a09">1.2M</div>
<div class="a" style="left:1295px;top:275px;width:72px;height:25px;background:#cbe7f9"></div>
<div class="t" style="left:1294px;top:282px;width:63px;text-align:right;font-size:11.6px;color:#0b0a09">911.6K</div>
<div class="a" style="left:1368px;top:275px;width:72px;height:25px;background:#f4f3f1"></div>
<div class="t" style="left:1367px;top:282px;width:63px;text-align:right;font-size:11.6px;color:#161513">1.7M</div>
<div class="a" style="left:479px;top:301px;width:80px;height:25px;background:#f4f3f1"></div>
<div class="t" style="left:489px;top:308px;font-size:11.6px">22</div>
<div class="a" style="left:560px;top:301px;width:72px;height:25px;background:#87c1e7"></div>
<div class="t" style="left:559px;top:308px;width:63px;text-align:right;font-size:11.6px;color:#0b0a09">3.4M</div>
<div class="a" style="left:633px;top:301px;width:72px;height:25px;background:#81bde5"></div>
<div class="t" style="left:632px;top:308px;width:63px;text-align:right;font-size:11.6px;color:#0b0a09">3.6M</div>
<div class="a" style="left:706px;top:301px;width:72px;height:25px;background:#a4d1ef"></div>
<div class="t" style="left:705px;top:308px;width:63px;text-align:right;font-size:11.6px;color:#0b0a09">2.3M</div>
<div class="a" style="left:779px;top:301px;width:72px;height:25px;background:#76b7e2"></div>
<div class="t" style="left:778px;top:308px;width:63px;text-align:right;font-size:11.6px;color:#0b0a09">4.0M</div>
<div class="a" style="left:852px;top:301px;width:77px;height:25px;background:#97caeb"></div>
<div class="t" style="left:851px;top:308px;width:68px;text-align:right;font-size:11.6px;color:#0b0a09">2.8M</div>
<div class="a" style="left:930px;top:301px;width:72px;height:25px;background:#81bde5"></div>
<div class="t" style="left:929px;top:308px;width:63px;text-align:right;font-size:11.6px;color:#0b0a09">3.6M</div>
<div class="a" style="left:1003px;top:301px;width:72px;height:25px;background:#aed7f2"></div>
<div class="t" style="left:1002px;top:308px;width:63px;text-align:right;font-size:11.6px;color:#0b0a09">1.9M</div>
<div class="a" style="left:1076px;top:301px;width:72px;height:25px;background:#a8d4f0"></div>
<div class="t" style="left:1075px;top:308px;width:63px;text-align:right;font-size:11.6px;color:#0b0a09">2.1M</div>
<div class="a" style="left:1149px;top:301px;width:72px;height:25px;background:#a8d4f0"></div>
<div class="t" style="left:1148px;top:308px;width:63px;text-align:right;font-size:11.6px;color:#0b0a09">2.1M</div>
<div class="a" style="left:1222px;top:301px;width:72px;height:25px;background:repeating-linear-gradient(135deg,#fafafa 0 4.25px,#9d9d9d 4.25px 4.95px)"></div>
<div class="a" style="left:1295px;top:301px;width:72px;height:25px;background:#c5e3f7"></div>
<div class="t" style="left:1294px;top:308px;width:63px;text-align:right;font-size:11.6px;color:#0b0a09">1.1M</div>
<div class="a" style="left:1368px;top:301px;width:72px;height:25px;background:#f4f3f1"></div>
<div class="t" style="left:1367px;top:308px;width:63px;text-align:right;font-size:11.6px;color:#161513">2.1M</div>
<div class="a" style="left:479px;top:327px;width:80px;height:25px;background:#f4f3f1"></div>
<div class="t" style="left:489px;top:334px;font-size:11.6px">23</div>
<div class="a" style="left:560px;top:327px;width:72px;height:25px;background:#3290ce"></div>
<div class="t" style="left:559px;top:334px;width:63px;text-align:right;font-size:11.6px;color:#0b0a09">6.2M</div>
<div class="a" style="left:633px;top:327px;width:72px;height:25px;background:#55a4d9"></div>
<div class="t" style="left:632px;top:334px;width:63px;text-align:right;font-size:11.6px;color:#0b0a09">5.1M</div>
<div class="a" style="left:706px;top:327px;width:72px;height:25px;background:#70b4e0"></div>
<div class="t" style="left:705px;top:334px;width:63px;text-align:right;font-size:11.6px;color:#0b0a09">4.2M</div>
<div class="a" style="left:779px;top:327px;width:72px;height:25px;background:#94c8eb"></div>
<div class="t" style="left:778px;top:334px;width:63px;text-align:right;font-size:11.6px;color:#0b0a09">2.9M</div>
<div class="a" style="left:852px;top:327px;width:77px;height:25px;background:#8cc4e8"></div>
<div class="t" style="left:851px;top:334px;width:68px;text-align:right;font-size:11.6px;color:#0b0a09">3.2M</div>
<div class="a" style="left:930px;top:327px;width:72px;height:25px;background:#81bde5"></div>
<div class="t" style="left:929px;top:334px;width:63px;text-align:right;font-size:11.6px;color:#0b0a09">3.6M</div>
<div class="a" style="left:1003px;top:327px;width:72px;height:25px;background:#9acbec"></div>
<div class="t" style="left:1002px;top:334px;width:63px;text-align:right;font-size:11.6px;color:#0b0a09">2.7M</div>
<div class="a" style="left:1076px;top:327px;width:72px;height:25px;background:#94c8eb"></div>
<div class="t" style="left:1075px;top:334px;width:63px;text-align:right;font-size:11.6px;color:#0b0a09">2.9M</div>
<div class="a" style="left:1149px;top:327px;width:72px;height:25px;background:#a1cfee"></div>
<div class="t" style="left:1148px;top:334px;width:63px;text-align:right;font-size:11.6px;color:#0b0a09">2.4M</div>
<div class="a" style="left:1222px;top:327px;width:72px;height:25px;background:#2487c8"></div>
<div class="t" style="left:1221px;top:334px;width:63px;text-align:right;font-size:11.6px;color:#0b0a09">6.7M</div>
<div class="a" style="left:1295px;top:327px;width:72px;height:25px;background:#c5e3f7"></div>
<div class="t" style="left:1294px;top:334px;width:63px;text-align:right;font-size:11.6px;color:#0b0a09">1.1M</div>
<div class="a" style="left:1368px;top:327px;width:72px;height:25px;background:#f4f3f1"></div>
<div class="t" style="left:1367px;top:334px;width:63px;text-align:right;font-size:11.6px;color:#161513">2.6M</div>
<div class="a" style="left:479px;top:353px;width:80px;height:25px;background:#f4f3f1"></div>
<div class="t" style="left:489px;top:360px;font-size:11.6px">24</div>
<div class="a" style="left:560px;top:353px;width:72px;height:25px;background:#52a2d8"></div>
<div class="t" style="left:559px;top:360px;width:63px;text-align:right;font-size:11.6px;color:#0b0a09">5.2M</div>
<div class="a" style="left:633px;top:353px;width:72px;height:25px;background:#5ba8db"></div>
<div class="t" style="left:632px;top:360px;width:63px;text-align:right;font-size:11.6px;color:#0b0a09">4.9M</div>
<div class="a" style="left:706px;top:353px;width:72px;height:25px;background:#64addd"></div>
<div class="t" style="left:705px;top:360px;width:63px;text-align:right;font-size:11.6px;color:#0b0a09">4.6M</div>
<div class="a" style="left:779px;top:353px;width:72px;height:25px;background:#6db2e0"></div>
<div class="t" style="left:778px;top:360px;width:63px;text-align:right;font-size:11.6px;color:#0b0a09">4.3M</div>
<div class="a" style="left:852px;top:353px;width:77px;height:25px;background:#84bfe6"></div>
<div class="t" style="left:851px;top:360px;width:68px;text-align:right;font-size:11.6px;color:#0b0a09">3.5M</div>
<div class="a" style="left:930px;top:353px;width:72px;height:25px;background:#5ba8db"></div>
<div class="t" style="left:929px;top:360px;width:63px;text-align:right;font-size:11.6px;color:#0b0a09">4.9M</div>
<div class="a" style="left:1003px;top:353px;width:72px;height:25px;background:#8ac2e8"></div>
<div class="t" style="left:1002px;top:360px;width:63px;text-align:right;font-size:11.6px;color:#0b0a09">3.3M</div>
<div class="a" style="left:1076px;top:353px;width:72px;height:25px;background:#76b7e2"></div>
<div class="t" style="left:1075px;top:360px;width:63px;text-align:right;font-size:11.6px;color:#0b0a09">4.0M</div>
<div class="a" style="left:1149px;top:353px;width:72px;height:25px;background:#9eceee"></div>
<div class="t" style="left:1148px;top:360px;width:63px;text-align:right;font-size:11.6px;color:#0b0a09">2.5M</div>
<div class="a" style="left:1222px;top:353px;width:72px;height:25px;background:#abd5f1"></div>
<div class="t" style="left:1221px;top:360px;width:63px;text-align:right;font-size:11.6px;color:#0b0a09">2.0M</div>
<div class="a" style="left:1295px;top:353px;width:72px;height:25px;background:#b8ddf4"></div>
<div class="t" style="left:1294px;top:360px;width:63px;text-align:right;font-size:11.6px;color:#0b0a09">1.5M</div>
<div class="a" style="left:1368px;top:353px;width:72px;height:25px;background:#f4f3f1"></div>
<div class="t" style="left:1367px;top:360px;width:63px;text-align:right;font-size:11.6px;color:#161513">3.0M</div>
<div class="a" style="left:479px;top:379px;width:80px;height:25px;background:#f4f3f1"></div>
<div class="t" style="left:489px;top:386px;font-size:11.6px">25</div>
<div class="a" style="left:560px;top:379px;width:72px;height:25px;background:#0e6396"></div>
<div class="t" style="left:559px;top:386px;width:63px;text-align:right;font-size:11.6px;color:#fff">8.6M</div>
<div class="a" style="left:633px;top:379px;width:72px;height:25px;background:#73b5e1"></div>
<div class="t" style="left:632px;top:386px;width:63px;text-align:right;font-size:11.6px;color:#0b0a09">4.1M</div>
<div class="a" style="left:706px;top:379px;width:72px;height:25px;background:#3b95d1"></div>
<div class="t" style="left:705px;top:386px;width:63px;text-align:right;font-size:11.6px;color:#0b0a09">5.9M</div>
<div class="a" style="left:779px;top:379px;width:72px;height:25px;background:#4ea0d7"></div>
<div class="t" style="left:778px;top:386px;width:63px;text-align:right;font-size:11.6px;color:#0b0a09">5.3M</div>
<div class="a" style="left:852px;top:379px;width:77px;height:25px;background:#61abdc"></div>
<div class="t" style="left:851px;top:386px;width:68px;text-align:right;font-size:11.6px;color:#0b0a09">4.7M</div>
<div class="a" style="left:930px;top:379px;width:72px;height:25px;background:#6db2e0"></div>
<div class="t" style="left:929px;top:386px;width:63px;text-align:right;font-size:11.6px;color:#0b0a09">4.3M</div>
<div class="a" style="left:1003px;top:379px;width:72px;height:25px;background:#9ccded"></div>
<div class="t" style="left:1002px;top:386px;width:63px;text-align:right;font-size:11.6px;color:#0b0a09">2.6M</div>
<div class="a" style="left:1076px;top:379px;width:72px;height:25px;background:#6db2e0"></div>
<div class="t" style="left:1075px;top:386px;width:63px;text-align:right;font-size:11.6px;color:#0b0a09">4.3M</div>
<div class="a" style="left:1149px;top:379px;width:72px;height:25px;background:#84bfe6"></div>
<div class="t" style="left:1148px;top:386px;width:63px;text-align:right;font-size:11.6px;color:#0b0a09">3.5M</div>
<div class="a" style="left:1222px;top:379px;width:72px;height:25px;background:#9eceee"></div>
<div class="t" style="left:1221px;top:386px;width:63px;text-align:right;font-size:11.6px;color:#0b0a09">2.5M</div>
<div class="a" style="left:1295px;top:379px;width:72px;height:25px;background:#b3daf3"></div>
<div class="t" style="left:1294px;top:386px;width:63px;text-align:right;font-size:11.6px;color:#0b0a09">1.7M</div>
<div class="a" style="left:1368px;top:379px;width:72px;height:25px;background:#f4f3f1"></div>
<div class="t" style="left:1367px;top:386px;width:63px;text-align:right;font-size:11.6px;color:#161513">3.1M</div>
<div class="a" style="left:479px;top:405px;width:80px;height:25px;background:#f4f3f1"></div>
<div class="t" style="left:489px;top:412px;font-size:11.6px">26</div>
<div class="a" style="left:560px;top:405px;width:72px;height:25px;background:#1675b1"></div>
<div class="t" style="left:559px;top:412px;width:63px;text-align:right;font-size:11.6px;color:#fff">7.6M</div>
<div class="a" style="left:633px;top:405px;width:72px;height:25px;background:#1c82c4"></div>
<div class="t" style="left:632px;top:412px;width:63px;text-align:right;font-size:11.6px;color:#0b0a09">7.0M</div>
<div class="a" style="left:706px;top:405px;width:72px;height:25px;background:#6db2e0"></div>
<div class="t" style="left:705px;top:412px;width:63px;text-align:right;font-size:11.6px;color:#0b0a09">4.3M</div>
<div class="a" style="left:779px;top:405px;width:72px;height:25px;background:#7cbae4"></div>
<div class="t" style="left:778px;top:412px;width:63px;text-align:right;font-size:11.6px;color:#0b0a09">3.8M</div>
<div class="a" style="left:852px;top:405px;width:77px;height:25px;background:#6ab0df"></div>
<div class="t" style="left:851px;top:412px;width:68px;text-align:right;font-size:11.6px;color:#0b0a09">4.4M</div>
<div class="a" style="left:930px;top:405px;width:72px;height:25px;background:#6db2e0"></div>
<div class="t" style="left:929px;top:412px;width:63px;text-align:right;font-size:11.6px;color:#0b0a09">4.3M</div>
<div class="a" style="left:1003px;top:405px;width:72px;height:25px;background:#8cc4e8"></div>
<div class="t" style="left:1002px;top:412px;width:63px;text-align:right;font-size:11.6px;color:#0b0a09">3.2M</div>
<div class="a" style="left:1076px;top:405px;width:72px;height:25px;background:#4b9ed6"></div>
<div class="t" style="left:1075px;top:412px;width:63px;text-align:right;font-size:11.6px;color:#0b0a09">5.4M</div>
<div class="a" style="left:1149px;top:405px;width:72px;height:25px;background:#489cd5"></div>
<div class="t" style="left:1148px;top:412px;width:63px;text-align:right;font-size:11.6px;color:#0b0a09">5.5M</div>
<div class="a" style="left:1222px;top:405px;width:72px;height:25px;background:#70b4e0"></div>
<div class="t" style="left:1221px;top:412px;width:63px;text-align:right;font-size:11.6px;color:#0b0a09">4.2M</div>
<div class="a" style="left:1295px;top:405px;width:72px;height:25px;background:#b3daf3"></div>
<div class="t" style="left:1294px;top:412px;width:63px;text-align:right;font-size:11.6px;color:#0b0a09">1.7M</div>
<div class="a" style="left:1368px;top:405px;width:72px;height:25px;background:#f4f3f1"></div>
<div class="t" style="left:1367px;top:412px;width:63px;text-align:right;font-size:11.6px;color:#161513">3.6M</div>
<div class="a" style="left:479px;top:431px;width:80px;height:25px;background:#f4f3f1"></div>
<div class="t" style="left:489px;top:438px;font-size:11.6px">27</div>
<div class="a" style="left:560px;top:431px;width:72px;height:25px;background:#126da5"></div>
<div class="t" style="left:559px;top:438px;width:63px;text-align:right;font-size:11.6px;color:#fff">8.0M</div>
<div class="a" style="left:633px;top:431px;width:72px;height:25px;background:#61abdc"></div>
<div class="t" style="left:632px;top:438px;width:63px;text-align:right;font-size:11.6px;color:#0b0a09">4.7M</div>
<div class="a" style="left:706px;top:431px;width:72px;height:25px;background:#79b9e3"></div>
<div class="t" style="left:705px;top:438px;width:63px;text-align:right;font-size:11.6px;color:#0b0a09">3.9M</div>
<div class="a" style="left:779px;top:431px;width:72px;height:25px;background:#70b4e0"></div>
<div class="t" style="left:778px;top:438px;width:63px;text-align:right;font-size:11.6px;color:#0b0a09">4.2M</div>
<div class="a" style="left:852px;top:431px;width:77px;height:25px;background:#5ea9dc"></div>
<div class="t" style="left:851px;top:438px;width:68px;text-align:right;font-size:11.6px;color:#0b0a09">4.8M</div>
<div class="a" style="left:930px;top:431px;width:72px;height:25px;background:#81bde5"></div>
<div class="t" style="left:929px;top:438px;width:63px;text-align:right;font-size:11.6px;color:#0b0a09">3.6M</div>
<div class="a" style="left:1003px;top:431px;width:72px;height:25px;background:#76b7e2"></div>
<div class="t" style="left:1002px;top:438px;width:63px;text-align:right;font-size:11.6px;color:#0b0a09">4.0M</div>
<div class="a" style="left:1076px;top:431px;width:72px;height:25px;background:#5ba8db"></div>
<div class="t" style="left:1075px;top:438px;width:63px;text-align:right;font-size:11.6px;color:#0b0a09">4.9M</div>
<div class="a" style="left:1149px;top:431px;width:72px;height:25px;background:#70b4e0"></div>
<div class="t" style="left:1148px;top:438px;width:63px;text-align:right;font-size:11.6px;color:#0b0a09">4.2M</div>
<div class="a" style="left:1222px;top:431px;width:72px;height:25px;background:#55a4d9"></div>
<div class="t" style="left:1221px;top:438px;width:63px;text-align:right;font-size:11.6px;color:#0b0a09">5.1M</div>
<div class="a" style="left:1295px;top:431px;width:72px;height:25px;background:#b8ddf4"></div>
<div class="t" style="left:1294px;top:438px;width:63px;text-align:right;font-size:11.6px;color:#0b0a09">1.5M</div>
<div class="a" style="left:1368px;top:431px;width:72px;height:25px;background:#f4f3f1"></div>
<div class="t" style="left:1367px;top:438px;width:63px;text-align:right;font-size:11.6px;color:#161513">3.3M</div>
<div class="a" style="left:479px;top:457px;width:80px;height:25px;background:#f4f3f1"></div>
<div class="t" style="left:489px;top:464px;font-size:11.6px">28</div>
<div class="a" style="left:560px;top:457px;width:72px;height:25px;background:#1471ab"></div>
<div class="t" style="left:559px;top:464px;width:63px;text-align:right;font-size:11.6px;color:#fff">7.8M</div>
<div class="a" style="left:633px;top:457px;width:72px;height:25px;background:#76b7e2"></div>
<div class="t" style="left:632px;top:464px;width:63px;text-align:right;font-size:11.6px;color:#0b0a09">4.0M</div>
<div class="a" style="left:706px;top:457px;width:72px;height:25px;background:#64addd"></div>
<div class="t" style="left:705px;top:464px;width:63px;text-align:right;font-size:11.6px;color:#0b0a09">4.6M</div>
<div class="a" style="left:779px;top:457px;width:72px;height:25px;background:#3e97d2"></div>
<div class="t" style="left:778px;top:464px;width:63px;text-align:right;font-size:11.6px;color:#0b0a09">5.8M</div>
<div class="a" style="left:852px;top:457px;width:77px;height:25px;background:#197cbb"></div>
<div class="t" style="left:851px;top:464px;width:68px;text-align:right;font-size:11.6px;color:#0b0a09">7.3M</div>
<div class="a" style="left:930px;top:457px;width:72px;height:25px;background:#9ccded"></div>
<div class="t" style="left:929px;top:464px;width:63px;text-align:right;font-size:11.6px;color:#0b0a09">2.6M</div>
<div class="a" style="left:1003px;top:457px;width:72px;height:25px;background:#8fc5e9"></div>
<div class="t" style="left:1002px;top:464px;width:63px;text-align:right;font-size:11.6px;color:#0b0a09">3.1M</div>
<div class="a" style="left:1076px;top:457px;width:72px;height:25px;background:#79b9e3"></div>
<div class="t" style="left:1075px;top:464px;width:63px;text-align:right;font-size:11.6px;color:#0b0a09">3.9M</div>
<div class="a" style="left:1149px;top:457px;width:72px;height:25px;background:#a4d1ef"></div>
<div class="t" style="left:1148px;top:464px;width:63px;text-align:right;font-size:11.6px;color:#0b0a09">2.3M</div>
<div class="a" style="left:1222px;top:457px;width:72px;height:25px;background:#b0d8f2"></div>
<div class="t" style="left:1221px;top:464px;width:63px;text-align:right;font-size:11.6px;color:#0b0a09">1.8M</div>
<div class="a" style="left:1295px;top:457px;width:72px;height:25px;background:#b5dbf3"></div>
<div class="t" style="left:1294px;top:464px;width:63px;text-align:right;font-size:11.6px;color:#0b0a09">1.6M</div>
<div class="a" style="left:1368px;top:457px;width:72px;height:25px;background:#f4f3f1"></div>
<div class="t" style="left:1367px;top:464px;width:63px;text-align:right;font-size:11.6px;color:#161513">3.3M</div>
<div class="a" style="left:479px;top:483px;width:80px;height:25px;background:#f4f3f1"></div>
<div class="t" style="left:489px;top:490px;font-size:11.6px">29</div>
<div class="a" style="left:560px;top:483px;width:72px;height:25px;background:#1f84c5"></div>
<div class="t" style="left:559px;top:490px;width:63px;text-align:right;font-size:11.6px;color:#0b0a09">6.9M</div>
<div class="a" style="left:633px;top:483px;width:72px;height:25px;background:#197cbb"></div>
<div class="t" style="left:632px;top:490px;width:63px;text-align:right;font-size:11.6px;color:#0b0a09">7.3M</div>
<div class="a" style="left:706px;top:483px;width:72px;height:25px;background:#489cd5"></div>
<div class="t" style="left:705px;top:490px;width:63px;text-align:right;font-size:11.6px;color:#0b0a09">5.5M</div>
<div class="a" style="left:779px;top:483px;width:72px;height:25px;background:#67aede"></div>
<div class="t" style="left:778px;top:490px;width:63px;text-align:right;font-size:11.6px;color:#0b0a09">4.5M</div>
<div class="a" style="left:852px;top:483px;width:77px;height:25px;background:#7ebce4"></div>
<div class="t" style="left:851px;top:490px;width:68px;text-align:right;font-size:11.6px;color:#0b0a09">3.7M</div>
<div class="a" style="left:930px;top:483px;width:72px;height:25px;background:#70b4e0"></div>
<div class="t" style="left:929px;top:490px;width:63px;text-align:right;font-size:11.6px;color:#0b0a09">4.2M</div>
<div class="a" style="left:1003px;top:483px;width:72px;height:25px;background:#87c1e7"></div>
<div class="t" style="left:1002px;top:490px;width:63px;text-align:right;font-size:11.6px;color:#0b0a09">3.4M</div>
<div class="a" style="left:1076px;top:483px;width:72px;height:25px;background:#76b7e2"></div>
<div class="t" style="left:1075px;top:490px;width:63px;text-align:right;font-size:11.6px;color:#0b0a09">4.0M</div>
<div class="a" style="left:1149px;top:483px;width:72px;height:25px;background:#9acbec"></div>
<div class="t" style="left:1148px;top:490px;width:63px;text-align:right;font-size:11.6px;color:#0b0a09">2.7M</div>
<div class="a" style="left:1222px;top:483px;width:72px;height:25px;background:#9ccded"></div>
<div class="t" style="left:1221px;top:490px;width:63px;text-align:right;font-size:11.6px;color:#0b0a09">2.6M</div>
<div class="a" style="left:1295px;top:483px;width:72px;height:25px;background:#b3daf3"></div>
<div class="t" style="left:1294px;top:490px;width:63px;text-align:right;font-size:11.6px;color:#0b0a09">1.7M</div>
<div class="a" style="left:1368px;top:483px;width:72px;height:25px;background:#f4f3f1"></div>
<div class="t" style="left:1367px;top:490px;width:63px;text-align:right;font-size:11.6px;color:#161513">3.1M</div>
<div class="a" style="left:479px;top:509px;width:80px;height:25px;background:#f4f3f1"></div>
<div class="t" style="left:489px;top:516px;font-size:11.6px">30</div>
<div class="a" style="left:560px;top:509px;width:72px;height:25px;background:#083752"></div>
<div class="t" style="left:559px;top:516px;width:63px;text-align:right;font-size:11.6px;color:#fff">11.0M</div>
<div class="a" style="left:633px;top:509px;width:72px;height:25px;background:#1b80c1"></div>
<div class="t" style="left:632px;top:516px;width:63px;text-align:right;font-size:11.6px;color:#0b0a09">7.1M</div>
<div class="a" style="left:706px;top:509px;width:72px;height:25px;background:#76b7e2"></div>
<div class="t" style="left:705px;top:516px;width:63px;text-align:right;font-size:11.6px;color:#0b0a09">4.0M</div>
<div class="a" style="left:779px;top:509px;width:72px;height:25px;background:#92c7ea"></div>
<div class="t" style="left:778px;top:516px;width:63px;text-align:right;font-size:11.6px;color:#0b0a09">3.0M</div>
<div class="a" style="left:852px;top:509px;width:77px;height:25px;background:#84bfe6"></div>
<div class="t" style="left:851px;top:516px;width:68px;text-align:right;font-size:11.6px;color:#0b0a09">3.5M</div>
<div class="a" style="left:930px;top:509px;width:72px;height:25px;background:#3e97d2"></div>
<div class="t" style="left:929px;top:516px;width:63px;text-align:right;font-size:11.6px;color:#0b0a09">5.8M</div>
<div class="a" style="left:1003px;top:509px;width:72px;height:25px;background:#84bfe6"></div>
<div class="t" style="left:1002px;top:516px;width:63px;text-align:right;font-size:11.6px;color:#0b0a09">3.5M</div>
<div class="a" style="left:1076px;top:509px;width:72px;height:25px;background:#84bfe6"></div>
<div class="t" style="left:1075px;top:516px;width:63px;text-align:right;font-size:11.6px;color:#0b0a09">3.5M</div>
<div class="a" style="left:1149px;top:509px;width:72px;height:25px;background:#81bde5"></div>
<div class="t" style="left:1148px;top:516px;width:63px;text-align:right;font-size:11.6px;color:#0b0a09">3.6M</div>
<div class="a" style="left:1222px;top:509px;width:72px;height:25px;background:#abd5f1"></div>
<div class="t" style="left:1221px;top:516px;width:63px;text-align:right;font-size:11.6px;color:#0b0a09">2.0M</div>
<div class="a" style="left:1295px;top:509px;width:72px;height:25px;background:#b8ddf4"></div>
<div class="t" style="left:1294px;top:516px;width:63px;text-align:right;font-size:11.6px;color:#0b0a09">1.5M</div>
<div class="a" style="left:1368px;top:509px;width:72px;height:25px;background:#f4f3f1"></div>
<div class="t" style="left:1367px;top:516px;width:63px;text-align:right;font-size:11.6px;color:#161513">3.5M</div>
<div class="a" style="left:479px;top:535px;width:80px;height:25px;background:#f4f3f1"></div>
<div class="t" style="left:489px;top:542px;font-size:11.6px">31</div>
<div class="a" style="left:560px;top:535px;width:72px;height:25px;background:#1b80c1"></div>
<div class="t" style="left:559px;top:542px;width:63px;text-align:right;font-size:11.6px;color:#0b0a09">7.1M</div>
<div class="a" style="left:633px;top:535px;width:72px;height:25px;background:#4ea0d7"></div>
<div class="t" style="left:632px;top:542px;width:63px;text-align:right;font-size:11.6px;color:#0b0a09">5.3M</div>
<div class="a" style="left:706px;top:535px;width:72px;height:25px;background:#3b95d1"></div>
<div class="t" style="left:705px;top:542px;width:63px;text-align:right;font-size:11.6px;color:#0b0a09">5.9M</div>
<div class="a" style="left:779px;top:535px;width:72px;height:25px;background:#81bde5"></div>
<div class="t" style="left:778px;top:542px;width:63px;text-align:right;font-size:11.6px;color:#0b0a09">3.6M</div>
<div class="a" style="left:852px;top:535px;width:77px;height:25px;background:#7ebce4"></div>
<div class="t" style="left:851px;top:542px;width:68px;text-align:right;font-size:11.6px;color:#0b0a09">3.7M</div>
<div class="a" style="left:930px;top:535px;width:72px;height:25px;background:#81bde5"></div>
<div class="t" style="left:929px;top:542px;width:63px;text-align:right;font-size:11.6px;color:#0b0a09">3.6M</div>
<div class="a" style="left:1003px;top:535px;width:72px;height:25px;background:#79b9e3"></div>
<div class="t" style="left:1002px;top:542px;width:63px;text-align:right;font-size:11.6px;color:#0b0a09">3.9M</div>
<div class="a" style="left:1076px;top:535px;width:72px;height:25px;background:#87c1e7"></div>
<div class="t" style="left:1075px;top:542px;width:63px;text-align:right;font-size:11.6px;color:#0b0a09">3.4M</div>
<div class="a" style="left:1149px;top:535px;width:72px;height:25px;background:#73b5e1"></div>
<div class="t" style="left:1148px;top:542px;width:63px;text-align:right;font-size:11.6px;color:#0b0a09">4.1M</div>
<div class="a" style="left:1222px;top:535px;width:72px;height:25px;background:#c5e3f7"></div>
<div class="t" style="left:1221px;top:542px;width:63px;text-align:right;font-size:11.6px;color:#0b0a09">1.1M</div>
<div class="a" style="left:1295px;top:535px;width:72px;height:25px;background:#b8ddf4"></div>
<div class="t" style="left:1294px;top:542px;width:63px;text-align:right;font-size:11.6px;color:#0b0a09">1.5M</div>
<div class="a" style="left:1368px;top:535px;width:72px;height:25px;background:#f4f3f1"></div>
<div class="t" style="left:1367px;top:542px;width:63px;text-align:right;font-size:11.6px;color:#161513">2.9M</div>
<div class="a" style="left:479px;top:561px;width:80px;height:25px;background:#f4f3f1"></div>
<div class="t" style="left:489px;top:568px;font-size:11.6px">32</div>
<div class="a" style="left:560px;top:561px;width:72px;height:25px;background:#6ab0df"></div>
<div class="t" style="left:559px;top:568px;width:63px;text-align:right;font-size:11.6px;color:#0b0a09">4.4M</div>
<div class="a" style="left:633px;top:561px;width:72px;height:25px;background:#2789c9"></div>
<div class="t" style="left:632px;top:568px;width:63px;text-align:right;font-size:11.6px;color:#0b0a09">6.6M</div>
<div class="a" style="left:706px;top:561px;width:72px;height:25px;background:#bbdff5"></div>
<div class="t" style="left:705px;top:568px;width:63px;text-align:right;font-size:11.6px;color:#0b0a09">1.4M</div>
<div class="a" style="left:779px;top:561px;width:72px;height:25px;background:#c5e3f7"></div>
<div class="t" style="left:778px;top:568px;width:63px;text-align:right;font-size:11.6px;color:#0b0a09">1.1M</div>
<div class="a" style="left:852px;top:561px;width:77px;height:25px;background:#8fc5e9"></div>
<div class="t" style="left:851px;top:568px;width:68px;text-align:right;font-size:11.6px;color:#0b0a09">3.1M</div>
<div class="a" style="left:930px;top:561px;width:72px;height:25px;background:#87c1e7"></div>
<div class="t" style="left:929px;top:568px;width:63px;text-align:right;font-size:11.6px;color:#0b0a09">3.4M</div>
<div class="a" style="left:1003px;top:561px;width:72px;height:25px;background:#84bfe6"></div>
<div class="t" style="left:1002px;top:568px;width:63px;text-align:right;font-size:11.6px;color:#0b0a09">3.5M</div>
<div class="a" style="left:1076px;top:561px;width:72px;height:25px;background:#a8d4f0"></div>
<div class="t" style="left:1075px;top:568px;width:63px;text-align:right;font-size:11.6px;color:#0b0a09">2.1M</div>
<div class="a" style="left:1149px;top:561px;width:72px;height:25px;background:#8cc4e8"></div>
<div class="t" style="left:1148px;top:568px;width:63px;text-align:right;font-size:11.6px;color:#0b0a09">3.2M</div>
<div class="a" style="left:1222px;top:561px;width:72px;height:25px;background:repeating-linear-gradient(135deg,#fafafa 0 4.25px,#9d9d9d 4.25px 4.95px)"></div>
<div class="a" style="left:1295px;top:561px;width:72px;height:25px;background:#b8ddf4"></div>
<div class="t" style="left:1294px;top:568px;width:63px;text-align:right;font-size:11.6px;color:#0b0a09">1.5M</div>
<div class="a" style="left:1368px;top:561px;width:72px;height:25px;background:#f4f3f1"></div>
<div class="t" style="left:1367px;top:568px;width:63px;text-align:right;font-size:11.6px;color:#161513">2.4M</div>
<div class="a" style="left:479px;top:587px;width:80px;height:25px;background:#f4f3f1"></div>
<div class="t" style="left:489px;top:594px;font-size:11.6px">33</div>
<div class="a" style="left:560px;top:587px;width:72px;height:25px;background:#70b4e0"></div>
<div class="t" style="left:559px;top:594px;width:63px;text-align:right;font-size:11.6px;color:#0b0a09">4.2M</div>
<div class="a" style="left:633px;top:587px;width:72px;height:25px;background:#a6d2f0"></div>
<div class="t" style="left:632px;top:594px;width:63px;text-align:right;font-size:11.6px;color:#0b0a09">2.2M</div>
<div class="a" style="left:706px;top:587px;width:72px;height:25px;background:#8ac2e8"></div>
<div class="t" style="left:705px;top:594px;width:63px;text-align:right;font-size:11.6px;color:#0b0a09">3.3M</div>
<div class="a" style="left:779px;top:587px;width:72px;height:25px;background:#73b5e1"></div>
<div class="t" style="left:778px;top:594px;width:63px;text-align:right;font-size:11.6px;color:#0b0a09">4.1M</div>
<div class="a" style="left:852px;top:587px;width:77px;height:25px;background:#9acbec"></div>
<div class="t" style="left:851px;top:594px;width:68px;text-align:right;font-size:11.6px;color:#0b0a09">2.7M</div>
<div class="a" style="left:930px;top:587px;width:72px;height:25px;background:#abd5f1"></div>
<div class="t" style="left:929px;top:594px;width:63px;text-align:right;font-size:11.6px;color:#0b0a09">2.0M</div>
<div class="a" style="left:1003px;top:587px;width:72px;height:25px;background:#70b4e0"></div>
<div class="t" style="left:1002px;top:594px;width:63px;text-align:right;font-size:11.6px;color:#0b0a09">4.2M</div>
<div class="a" style="left:1076px;top:587px;width:72px;height:25px;background:#c2e2f6"></div>
<div class="t" style="left:1075px;top:594px;width:63px;text-align:right;font-size:11.6px;color:#0b0a09">1.2M</div>
<div class="a" style="left:1149px;top:587px;width:72px;height:25px;background:#a1cfee"></div>
<div class="t" style="left:1148px;top:594px;width:63px;text-align:right;font-size:11.6px;color:#0b0a09">2.4M</div>
<div class="a" style="left:1222px;top:587px;width:72px;height:25px;background:#c2e2f6"></div>
<div class="t" style="left:1221px;top:594px;width:63px;text-align:right;font-size:11.6px;color:#0b0a09">1.2M</div>
<div class="a" style="left:1295px;top:587px;width:72px;height:25px;background:#c5e3f7"></div>
<div class="t" style="left:1294px;top:594px;width:63px;text-align:right;font-size:11.6px;color:#0b0a09">1.1M</div>
<div class="a" style="left:1368px;top:587px;width:72px;height:25px;background:#f4f3f1"></div>
<div class="t" style="left:1367px;top:594px;width:63px;text-align:right;font-size:11.6px;color:#161513">1.6M</div>
<div class="a" style="left:479px;top:613px;width:80px;height:25px;background:#f4f3f1"></div>
<div class="t" style="left:489px;top:620px;font-size:11.6px">34</div>
<div class="a" style="left:560px;top:613px;width:72px;height:25px;background:#bbdff5"></div>
<div class="t" style="left:559px;top:620px;width:63px;text-align:right;font-size:11.6px;color:#0b0a09">1.4M</div>
<div class="a" style="left:633px;top:613px;width:72px;height:25px;background:#b0d8f2"></div>
<div class="t" style="left:632px;top:620px;width:63px;text-align:right;font-size:11.6px;color:#0b0a09">1.8M</div>
<div class="a" style="left:706px;top:613px;width:72px;height:25px;background:#8fc5e9"></div>
<div class="t" style="left:705px;top:620px;width:63px;text-align:right;font-size:11.6px;color:#0b0a09">3.1M</div>
<div class="a" style="left:779px;top:613px;width:72px;height:25px;background:#a8d4f0"></div>
<div class="t" style="left:778px;top:620px;width:63px;text-align:right;font-size:11.6px;color:#0b0a09">2.1M</div>
<div class="a" style="left:852px;top:613px;width:77px;height:25px;background:#9ccded"></div>
<div class="t" style="left:851px;top:620px;width:68px;text-align:right;font-size:11.6px;color:#0b0a09">2.6M</div>
<div class="a" style="left:930px;top:613px;width:72px;height:25px;background:#b8ddf4"></div>
<div class="t" style="left:929px;top:620px;width:63px;text-align:right;font-size:11.6px;color:#0b0a09">1.5M</div>
<div class="a" style="left:1003px;top:613px;width:72px;height:25px;background:#94c8eb"></div>
<div class="t" style="left:1002px;top:620px;width:63px;text-align:right;font-size:11.6px;color:#0b0a09">2.9M</div>
<div class="a" style="left:1076px;top:613px;width:72px;height:25px;background:#b5dbf3"></div>
<div class="t" style="left:1075px;top:620px;width:63px;text-align:right;font-size:11.6px;color:#0b0a09">1.6M</div>
<div class="a" style="left:1149px;top:613px;width:72px;height:25px;background:#cce7f9"></div>
<div class="t" style="left:1148px;top:620px;width:63px;text-align:right;font-size:11.6px;color:#0b0a09">866.7K</div>
<div class="a" style="left:1222px;top:613px;width:72px;height:25px;background:repeating-linear-gradient(135deg,#fafafa 0 4.25px,#9d9d9d 4.25px 4.95px)"></div>
<div class="a" style="left:1295px;top:613px;width:72px;height:25px;background:#d2ebfa"></div>
<div class="t" style="left:1294px;top:620px;width:63px;text-align:right;font-size:11.6px;color:#0b0a09">693.4K</div>
<div class="a" style="left:1368px;top:613px;width:72px;height:25px;background:#f4f3f1"></div>
<div class="t" style="left:1367px;top:620px;width:63px;text-align:right;font-size:11.6px;color:#161513">1.3M</div>
<div class="a" style="left:479px;top:639px;width:80px;height:25px;background:#f4f3f1"></div>
<div class="t" style="left:489px;top:646px;font-size:11.6px">35</div>
<div class="a" style="left:560px;top:639px;width:72px;height:25px;background:#abd5f1"></div>
<div class="t" style="left:559px;top:646px;width:63px;text-align:right;font-size:11.6px;color:#0b0a09">2.0M</div>
<div class="a" style="left:633px;top:639px;width:72px;height:25px;background:#b3daf3"></div>
<div class="t" style="left:632px;top:646px;width:63px;text-align:right;font-size:11.6px;color:#0b0a09">1.7M</div>
<div class="a" style="left:706px;top:639px;width:72px;height:25px;background:repeating-linear-gradient(135deg,#fafafa 0 4.25px,#9d9d9d 4.25px 4.95px)"></div>
<div class="a" style="left:779px;top:639px;width:72px;height:25px;background:#d8eefb"></div>
<div class="t" style="left:778px;top:646px;width:63px;text-align:right;font-size:11.6px;color:#0b0a09">450.0K</div>
<div class="a" style="left:852px;top:639px;width:77px;height:25px;background:#daeffb"></div>
<div class="t" style="left:851px;top:646px;width:68px;text-align:right;font-size:11.6px;color:#0b0a09">268.0K</div>
<div class="a" style="left:930px;top:639px;width:72px;height:25px;background:#c8e5f8"></div>
<div class="t" style="left:929px;top:646px;width:63px;text-align:right;font-size:11.6px;color:#0b0a09">1.0M</div>
<div class="a" style="left:1003px;top:639px;width:72px;height:25px;background:#a6d2f0"></div>
<div class="t" style="left:1002px;top:646px;width:63px;text-align:right;font-size:11.6px;color:#0b0a09">2.2M</div>
<div class="a" style="left:1076px;top:639px;width:72px;height:25px;background:#b5dbf3"></div>
<div class="t" style="left:1075px;top:646px;width:63px;text-align:right;font-size:11.6px;color:#0b0a09">1.6M</div>
<div class="a" style="left:1149px;top:639px;width:72px;height:25px;background:#b8ddf4"></div>
<div class="t" style="left:1148px;top:646px;width:63px;text-align:right;font-size:11.6px;color:#0b0a09">1.5M</div>
<div class="a" style="left:1222px;top:639px;width:72px;height:25px;background:repeating-linear-gradient(135deg,#fafafa 0 4.25px,#9d9d9d 4.25px 4.95px)"></div>
<div class="a" style="left:1295px;top:639px;width:72px;height:25px;background:#d0eafa"></div>
<div class="t" style="left:1294px;top:646px;width:63px;text-align:right;font-size:11.6px;color:#0b0a09">738.4K</div>
<div class="a" style="left:1368px;top:639px;width:72px;height:25px;background:#f4f3f1"></div>
<div class="t" style="left:1367px;top:646px;width:63px;text-align:right;font-size:11.6px;color:#161513">1.0M</div>
<div class="a" style="left:479px;top:665px;width:80px;height:25px;background:#f4f3f1"></div>
<div class="t" style="left:489px;top:672px;font-size:11.6px">36</div>
<div class="a" style="left:560px;top:665px;width:72px;height:25px;background:#b0d8f2"></div>
<div class="t" style="left:559px;top:672px;width:63px;text-align:right;font-size:11.6px;color:#0b0a09">1.8M</div>
<div class="a" style="left:633px;top:665px;width:72px;height:25px;background:#cde8f9"></div>
<div class="t" style="left:632px;top:672px;width:63px;text-align:right;font-size:11.6px;color:#0b0a09">835.8K</div>
<div class="a" style="left:706px;top:665px;width:72px;height:25px;background:repeating-linear-gradient(135deg,#fafafa 0 4.25px,#9d9d9d 4.25px 4.95px)"></div>
<div class="a" style="left:779px;top:665px;width:72px;height:25px;background:#bbdff5"></div>
<div class="t" style="left:778px;top:672px;width:63px;text-align:right;font-size:11.6px;color:#0b0a09">1.4M</div>
<div class="a" style="left:852px;top:665px;width:77px;height:25px;background:#d9eefb"></div>
<div class="t" style="left:851px;top:672px;width:68px;text-align:right;font-size:11.6px;color:#0b0a09">418.8K</div>
<div class="a" style="left:930px;top:665px;width:72px;height:25px;background:#d6edfb"></div>
<div class="t" style="left:929px;top:672px;width:63px;text-align:right;font-size:11.6px;color:#0b0a09">547.9K</div>
<div class="a" style="left:1003px;top:665px;width:72px;height:25px;background:#81bde5"></div>
<div class="t" style="left:1002px;top:672px;width:63px;text-align:right;font-size:11.6px;color:#0b0a09">3.6M</div>
<div class="a" style="left:1076px;top:665px;width:72px;height:25px;background:#d8eefb"></div>
<div class="t" style="left:1075px;top:672px;width:63px;text-align:right;font-size:11.6px;color:#0b0a09">512.4K</div>
<div class="a" style="left:1149px;top:665px;width:72px;height:25px;background:#cce7f9"></div>
<div class="t" style="left:1148px;top:672px;width:63px;text-align:right;font-size:11.6px;color:#0b0a09">875.0K</div>
<div class="a" style="left:1222px;top:665px;width:72px;height:25px;background:repeating-linear-gradient(135deg,#fafafa 0 4.25px,#9d9d9d 4.25px 4.95px)"></div>
<div class="a" style="left:1295px;top:665px;width:72px;height:25px;background:#daeffb"></div>
<div class="t" style="left:1294px;top:672px;width:63px;text-align:right;font-size:11.6px;color:#0b0a09">325.7K</div>
<div class="a" style="left:1368px;top:665px;width:72px;height:25px;background:#f4f3f1"></div>
<div class="t" style="left:1367px;top:672px;width:63px;text-align:right;font-size:11.6px;color:#161513">655.1K</div>
<div class="a" style="left:479px;top:691px;width:80px;height:25px;background:#f4f3f1"></div>
<div class="t" style="left:489px;top:698px;font-size:11.6px">Grand Total</div>
<div class="a" style="left:560px;top:691px;width:72px;height:25px;background:#f4f3f1"></div>
<div class="t" style="left:559px;top:698px;width:63px;text-align:right;font-size:11.6px;color:#161513">5.4M</div>
<div class="a" style="left:633px;top:691px;width:72px;height:25px;background:#f4f3f1"></div>
<div class="t" style="left:632px;top:698px;width:63px;text-align:right;font-size:11.6px;color:#161513">4.0M</div>
<div class="a" style="left:706px;top:691px;width:72px;height:25px;background:#f4f3f1"></div>
<div class="t" style="left:705px;top:698px;width:63px;text-align:right;font-size:11.6px;color:#161513">3.8M</div>
<div class="a" style="left:779px;top:691px;width:72px;height:25px;background:#f4f3f1"></div>
<div class="t" style="left:778px;top:698px;width:63px;text-align:right;font-size:11.6px;color:#161513">3.8M</div>
<div class="a" style="left:852px;top:691px;width:77px;height:25px;background:#f4f3f1"></div>
<div class="t" style="left:851px;top:698px;width:68px;text-align:right;font-size:11.6px;color:#161513">3.3M</div>
<div class="a" style="left:930px;top:691px;width:72px;height:25px;background:#f4f3f1"></div>
<div class="t" style="left:929px;top:698px;width:63px;text-align:right;font-size:11.6px;color:#161513">3.2M</div>
<div class="a" style="left:1003px;top:691px;width:72px;height:25px;background:#f4f3f1"></div>
<div class="t" style="left:1002px;top:698px;width:63px;text-align:right;font-size:11.6px;color:#161513">2.9M</div>
<div class="a" style="left:1076px;top:691px;width:72px;height:25px;background:#f4f3f1"></div>
<div class="t" style="left:1075px;top:698px;width:63px;text-align:right;font-size:11.6px;color:#161513">2.7M</div>
<div class="a" style="left:1149px;top:691px;width:72px;height:25px;background:#f4f3f1"></div>
<div class="t" style="left:1148px;top:698px;width:63px;text-align:right;font-size:11.6px;color:#161513">2.7M</div>
<div class="a" style="left:1222px;top:691px;width:72px;height:25px;background:#f4f3f1"></div>
<div class="t" style="left:1221px;top:698px;width:63px;text-align:right;font-size:11.6px;color:#161513">2.3M</div>
<div class="a" style="left:1295px;top:691px;width:72px;height:25px;background:#f4f3f1"></div>
<div class="t" style="left:1294px;top:698px;width:63px;text-align:right;font-size:11.6px;color:#161513">1.2M</div>
<div class="a" style="left:1368px;top:691px;width:72px;height:25px;background:#f4f3f1"></div>
<div class="t" style="left:1367px;top:698px;width:63px;text-align:right;font-size:11.6px;color:#161513">2.4M</div></body></html>
